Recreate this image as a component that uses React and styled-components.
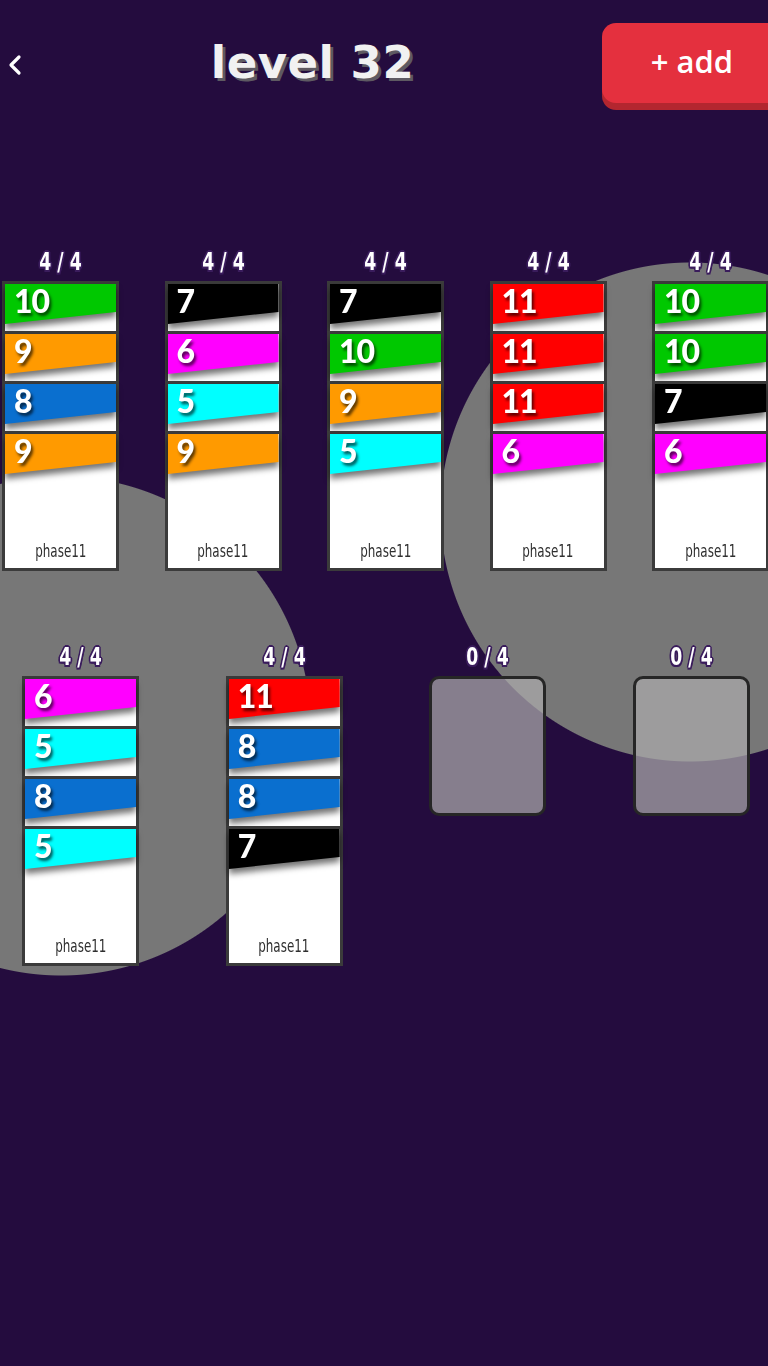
import React from "react";
import styled, { createGlobalStyle } from "styled-components";

const GlobalStyle = createGlobalStyle`
  html, body { margin: 0; padding: 0; background: #240c3e; }
  body { overflow-x: hidden; }
  * { box-sizing: border-box; }
`;

const Page = styled.div`
  width: 768px;
  min-height: 1366px;
  overflow: hidden;
  background:
    radial-gradient(circle 250px at 690px 512px, #777777 0 249px, rgba(119,119,119,0) 250px),
    radial-gradient(circle 250px at 61px 726px, #777777 0 249px, rgba(119,119,119,0) 250px),
    #240c3e;
  font-family: "DejaVu Sans", sans-serif;
`;

const Header = styled.header`
  display: flex;
  align-items: center;
  height: 80px;
  margin-top: 23px;
  padding-left: 7px;
`;

const BackButton = styled.button`
  display: flex;
  align-items: center;
  justify-content: center;
  width: 16px;
  height: 24px;
  margin-top: 3px;
  padding: 0;
  border: none;
  background: none;
  color: #ffffff;
`;

const Title = styled.h1`
  flex: 1;
  margin: 0;
  text-align: center;
  font-family: "DejaVu Sans", sans-serif;
  font-weight: 700;
  font-size: 45px;
  line-height: 60px;
  letter-spacing: 0.5px;
  color: #f1f1f1;
  text-shadow: 3px 3px 0 #5e5a62;
`;

const AddButton = styled.button`
  width: 180px;
  height: 80px;
  margin-right: -14px;
  flex-shrink: 0;
  border: none;
  border-radius: 14px;
  background: #e4303e;
  box-shadow: 0 7px 0 #b3262f;
  color: #ffffff;
  font-family: "Open Sans", sans-serif;
  font-weight: 600;
  font-size: 31px;
  line-height: 1;
  padding: 0 0 4px 0;
`;

const Board = styled.main`
  display: flex;
  flex-direction: column;
  gap: 72px;
  margin-top: 145px;
`;

const Row = styled.section`
  display: flex;
  align-items: flex-start;
  padding-left: ${(p) => p.$pad}px;
  gap: ${(p) => p.$gap}px;
`;

const Stack = styled.div`
  width: 117px;
  flex-shrink: 0;
  display: flex;
  flex-direction: column;
  align-items: stretch;
`;

const Count = styled.div`
  height: 28px;
  margin-bottom: 5px;
  text-align: center;
  font-family: "DejaVu Sans Condensed", "DejaVu Sans", sans-serif;
  font-weight: 700;
  font-size: 24px;
  line-height: 28px;
  color: #ffffff;
`;

const CountText = styled.span`
  display: inline-block;
  transform: scaleX(0.8);
  text-shadow:
    -1.5px -1.5px 0 #3a1c5c, 1.5px -1.5px 0 #3a1c5c,
    -1.5px 1.5px 0 #3a1c5c, 1.5px 1.5px 0 #3a1c5c,
    0 2px 0 #3a1c5c, 2px 0 0 #3a1c5c, -2px 0 0 #3a1c5c, 0 -2px 0 #3a1c5c;
`;

const Card = styled.div`
  position: relative;
  height: 140px;
  margin-bottom: ${(p) => (p.$last ? 0 : -90)}px;
  border: 3px solid #3b3b3b;
  background: #ffffff;
  display: flex;
  flex-direction: column;
`;

const BandShadow = styled.div`
  filter: drop-shadow(0 5px 3px rgba(0, 0, 0, 0.55));
`;

const Band = styled.div`
  height: 40px;
  background: ${(p) => p.$color};
  clip-path: polygon(0 0, 100% 0, 100% 70%, 0 100%);
  padding: 1px 0 0 9px;
`;

const Num = styled.span`
  display: block;
  font-family: "Lato", "DejaVu Sans", sans-serif;
  font-weight: 900;
  font-size: 32px;
  line-height: 32px;
  letter-spacing: -1px;
  color: #ffffff;
  text-shadow: 2px 3px 3px rgba(0, 0, 0, 0.65);
`;

const Footer = styled.div`
  margin-top: auto;
  padding-bottom: 7px;
  text-align: center;
  font-family: "DejaVu Sans Condensed", "DejaVu Sans", sans-serif;
  font-size: 17px;
  line-height: 20px;
  color: #2f2f2f;
`;

const FooterText = styled.span`
  display: inline-block;
  transform: scaleX(0.78);
`;

const Slot = styled.div`
  height: 140px;
  border: 3px solid #262626;
  border-radius: 10px;
  background: rgba(172, 170, 172, 0.72);
`;

const C = {
  green: "#00c800",
  orange: "#ff9a00",
  blue: "#0a6fcf",
  cyan: "#00ffff",
  magenta: "#ff00ff",
  black: "#000000",
  red: "#ff0000",
};

const row1 = [
  [[10, C.green], [9, C.orange], [8, C.blue], [9, C.orange]],
  [[7, C.black], [6, C.magenta], [5, C.cyan], [9, C.orange]],
  [[7, C.black], [10, C.green], [9, C.orange], [5, C.cyan]],
  [[11, C.red], [11, C.red], [11, C.red], [6, C.magenta]],
  [[10, C.green], [10, C.green], [7, C.black], [6, C.magenta]],
];

const row2 = [
  [[6, C.magenta], [5, C.cyan], [8, C.blue], [5, C.cyan]],
  [[11, C.red], [8, C.blue], [8, C.blue], [7, C.black]],
  [],
  [],
];

function CardStack({ cards }) {
  return (
    <Stack>
      <Count>
        <CountText>{cards.length} / 4</CountText>
      </Count>
      {cards.length === 0 ? (
        <Slot />
      ) : (
        cards.map(([n, color], i) => {
          const last = i === cards.length - 1;
          return (
            <Card key={i} $last={last}>
              <BandShadow>
                <Band $color={color}>
                  <Num>{n}</Num>
                </Band>
              </BandShadow>
              {last && (
                <Footer>
                  <FooterText>phase11</FooterText>
                </Footer>
              )}
            </Card>
          );
        })
      )}
    </Stack>
  );
}

export default function App() {
  return (
    <Page>
      <GlobalStyle />
      <Header>
        <BackButton aria-label="back">
          <svg width="14" height="22" viewBox="0 0 14 22" fill="none">
            <polyline
              points="11,3 3,11 11,19"
              stroke="#ffffff"
              strokeWidth="3.2"
              strokeLinecap="round"
              strokeLinejoin="round"
            />
          </svg>
        </BackButton>
        <Title>level 32</Title>
        <AddButton>+ add</AddButton>
      </Header>
      <Board>
        <Row $pad={2} $gap={45.5}>
          {row1.map((cards, i) => (
            <CardStack key={i} cards={cards} />
          ))}
        </Row>
        <Row $pad={22} $gap={86.7}>
          {row2.map((cards, i) => (
            <CardStack key={i} cards={cards} />
          ))}
        </Row>
      </Board>
    </Page>
  );
}
